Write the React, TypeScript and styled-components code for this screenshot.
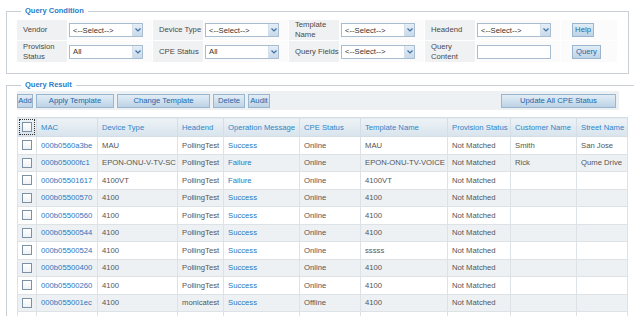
import React from 'react';
import styled, { createGlobalStyle } from 'styled-components';

const Global = createGlobalStyle`
  html, body { margin: 0; padding: 0; background: #fff; overflow: hidden; }
  body { font-family: "Liberation Sans", Arial, sans-serif; font-size: 7.7px; color: #555; }
  * { box-sizing: border-box; }
`;

const Page = styled.div`
  width: 634px;
  height: 316px;
  overflow: hidden;
  padding: 5px 0 0 6px;
`;

const Fieldset = styled.fieldset<{ $wide?: boolean }>`
  margin: ${p => (p.$wide ? '5px -40px 0 0' : '0 5px 0 0')};
  border: 1px solid #c9cfd5;
  padding: ${p => (p.$wide ? '0 10px 10px 10px' : '3px 10px 11px 10px')};
  min-width: 0;
`;

const Legend = styled.legend`
  padding: 0 4px;
  margin-left: 4px;
  color: #2a7cc7;
  font-weight: bold;
  font-size: 7.5px;
  line-height: 12px;
`;

const CondGrid = styled.div`
  display: grid;
  grid-template-columns: 50px 84px 50px 84px 50px 84px 50px 84px 56px;
  grid-template-rows: 20px 21px;
  gap: 1px;
  width: 600px;
`;

const LabelCell = styled.div`
  background: #eff1f2;
  display: flex;
  align-items: center;
  padding-left: 6px;
  line-height: 10px;
  color: #4a4a4a;
`;

const ValueCell = styled.div<{ $pad?: number }>`
  background: #fbfbfb;
  display: flex;
  align-items: center;
  padding-left: ${p => p.$pad ?? 1}px;
`;

const SelectBox = styled.div`
  width: 74px;
  height: 14px;
  border: 1px solid #a9bdd0;
  background: #fff;
  display: flex;
  align-items: center;
  justify-content: space-between;
  padding-left: 3px;
  color: #333;
`;

const SelectArrow = styled.span`
  width: 10px;
  height: 12px;
  background: linear-gradient(#e6eef7, #c8d9eb);
  border-left: 1px solid #d2deea;
  display: flex;
  align-items: center;
  justify-content: center;
`;

const TextInput = styled.div`
  width: 74px;
  height: 14px;
  border: 1px solid #a9bdd0;
  background: #fff;
`;

const Btn = styled.button<{ $w: number }>`
  width: ${p => p.$w}px;
  height: 14px;
  padding: 0;
  border: 1px solid #9ab6cf;
  background: linear-gradient(#e2edf6, #bdd3e6);
  color: #2266a8;
  font-family: "Liberation Sans", Arial, sans-serif;
  font-size: 7.7px;
  line-height: 12px;
  cursor: pointer;
`;

const Toolbar = styled.div`
  width: 602px;
  height: 19px;
  background: #eef1f3;
  display: flex;
  align-items: center;
  gap: 3px;
  padding-right: 3px;
`;

const Spacer = styled.div`
  flex: 1;
`;

const Table = styled.table`
  margin-top: 7px;
  width: 611px;
  border-collapse: collapse;
  table-layout: fixed;
`;

const Th = styled.th<{ $w: number; $center?: boolean }>`
  width: ${p => p.$w}px;
  height: 19px;
  padding: 0 0 0 ${p => (p.$center ? 0 : 4)}px;
  text-align: ${p => (p.$center ? 'center' : 'left')};
  font-weight: normal;
  color: #2e86c9;
  background: linear-gradient(#eef3f7, #d8e3ec);
  border: 1px solid #d6dee5;
  white-space: nowrap;
  overflow: hidden;
`;

const Tr = styled.tr<{ $alt: boolean }>`
  background: ${p => (p.$alt ? '#edf1f4' : '#ffffff')};
`;

const Td = styled.td<{ $link?: boolean; $center?: boolean }>`
  height: 17.5px;
  padding: 0 0 0 ${p => (p.$center ? 0 : 4)}px;
  text-align: ${p => (p.$center ? 'center' : 'left')};
  border: 1px solid #dde2e6;
  color: ${p => (p.$link ? '#2a78c0' : '#555')};
  white-space: nowrap;
  overflow: hidden;
`;

const Check = styled.span<{ $focus?: boolean }>`
  display: inline-block;
  vertical-align: middle;
  width: 10px;
  height: 10px;
  border: 1px solid #7d91a6;
  background: linear-gradient(#ffffff, #eef2f5);
  outline: ${p => (p.$focus ? '1px dotted #333' : 'none')};
  outline-offset: 2px;
`;

const Chevron = () => (
  <svg width="6" height="4" viewBox="0 0 6 4">
    <path d="M0.5 0.5 L3 3 L5.5 0.5" fill="none" stroke="#3d6f9f" strokeWidth="1.2" />
  </svg>
);

const Select = ({ text }: { text: string }) => (
  <SelectBox>
    <span>{text}</span>
    <SelectArrow>
      <Chevron />
    </SelectArrow>
  </SelectBox>
);

type Row = [string, string, string, string, string, string, string, string, string];

const rows: Row[] = [
  ['000b0560a3be', 'MAU', 'PollingTest', 'Success', 'Online', 'MAU', 'Not Matched', 'Smith', 'San Jose'],
  ['000b05000fc1', 'EPON-ONU-V-TV-SC', 'PollingTest', 'Failure', 'Online', 'EPON-ONU-TV-VOICE', 'Not Matched', 'Rick', 'Qume Drive'],
  ['000b05501617', '4100VT', 'PollingTest', 'Failure', 'Online', '4100VT', 'Not Matched', '', ''],
  ['000b05500570', '4100', 'PollingTest', 'Success', 'Online', '4100', 'Not Matched', '', ''],
  ['000b05500560', '4100', 'PollingTest', 'Success', 'Online', '4100', 'Not Matched', '', ''],
  ['000b05500544', '4100', 'PollingTest', 'Success', 'Online', '4100', 'Not Matched', '', ''],
  ['000b05500524', '4100', 'PollingTest', 'Success', 'Online', 'sssss', 'Not Matched', '', ''],
  ['000b05500400', '4100', 'PollingTest', 'Success', 'Online', '4100', 'Not Matched', '', ''],
  ['000b05500260', '4100', 'PollingTest', 'Success', 'Online', '4100', 'Not Matched', '', ''],
  ['000b055001ec', '4100', 'monicatest', 'Success', 'Offline', '4100', 'Not Matched', '', ''],
];

const cols: [string, number][] = [
  ['MAC', 61],
  ['Device Type', 80],
  ['Headend', 46],
  ['Operation Message', 76],
  ['CPE Status', 61],
  ['Template Name', 87],
  ['Provision Status', 63],
  ['Customer Name', 66],
  ['Street Name', 51],
];

export default function App() {
  return (
    <Page>
      <Global />
      <Fieldset>
        <Legend>Query Condition</Legend>
        <CondGrid>
          <LabelCell>Vendor</LabelCell>
          <ValueCell><Select text="<--Select-->" /></ValueCell>
          <LabelCell>Device Type</LabelCell>
          <ValueCell><Select text="<--Select-->" /></ValueCell>
          <LabelCell>Template<br />Name</LabelCell>
          <ValueCell><Select text="<--Select-->" /></ValueCell>
          <LabelCell>Headend</LabelCell>
          <ValueCell><Select text="<--Select-->" /></ValueCell>
          <ValueCell $pad={11}><Btn $w={22}>Help</Btn></ValueCell>

          <LabelCell>Provision<br />Status</LabelCell>
          <ValueCell><Select text="All" /></ValueCell>
          <LabelCell>CPE Status</LabelCell>
          <ValueCell><Select text="All" /></ValueCell>
          <LabelCell>Query Fields</LabelCell>
          <ValueCell><Select text="<--Select-->" /></ValueCell>
          <LabelCell>Query<br />Content</LabelCell>
          <ValueCell><TextInput /></ValueCell>
          <ValueCell $pad={11}><Btn $w={29}>Query</Btn></ValueCell>
        </CondGrid>
      </Fieldset>

      <Fieldset $wide>
        <Legend>Query Result</Legend>
        <Toolbar>
          <Btn $w={16}>Add</Btn>
          <Btn $w={78}>Apply Template</Btn>
          <Btn $w={93}>Change Template</Btn>
          <Btn $w={32}>Delete</Btn>
          <Btn $w={22}>Audit</Btn>
          <Spacer />
          <Btn $w={115}>Update All CPE Status</Btn>
        </Toolbar>
        <Table>
          <thead>
            <tr>
              <Th $w={19} $center>
                <Check $focus />
              </Th>
              {cols.map(([name, w]) => (
                <Th key={name} $w={w}>{name}</Th>
              ))}
            </tr>
          </thead>
          <tbody>
            {rows.map((r, i) => (
              <Tr key={r[0]} $alt={i % 2 === 1}>
                <Td $center><Check /></Td>
                <Td $link>{r[0]}</Td>
                <Td>{r[1]}</Td>
                <Td>{r[2]}</Td>
                <Td $link>{r[3]}</Td>
                <Td>{r[4]}</Td>
                <Td>{r[5]}</Td>
                <Td>{r[6]}</Td>
                <Td>{r[7]}</Td>
                <Td>{r[8]}</Td>
              </Tr>
            ))}
            <Tr $alt={false}>
              {Array.from({ length: 10 }, (_, k) => (
                <Td key={k} />
              ))}
            </Tr>
          </tbody>
        </Table>
      </Fieldset>
    </Page>
  );
}
